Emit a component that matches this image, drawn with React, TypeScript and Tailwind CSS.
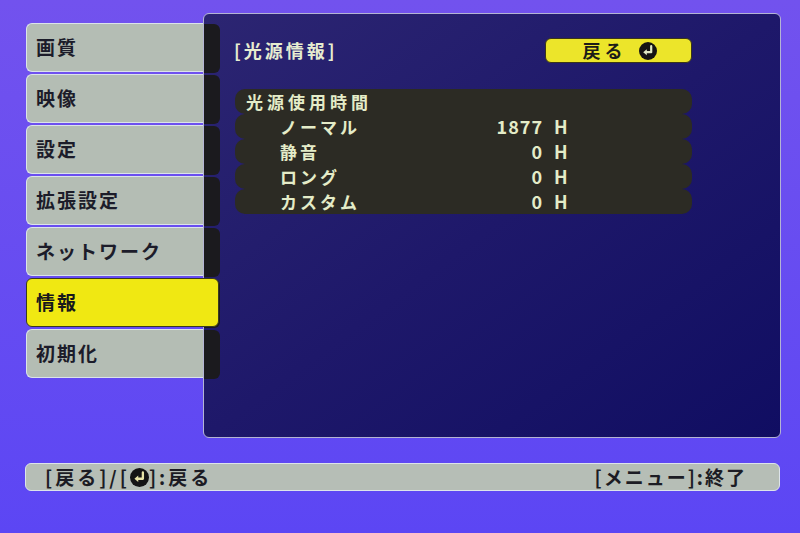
const MENU = ['画質', '映像', '設定', '拡張設定', 'ネットワーク', '情報', '初期化']
const ACTIVE = '情報'

const HOURS = [
  { label: 'ノーマル', value: '1877' },
  { label: '静音', value: '0' },
  { label: 'ロング', value: '0' },
  { label: 'カスタム', value: '0' },
]

const font = { fontFamily: '"Noto Sans CJK JP", "Noto Sans", sans-serif' }

function EnterIcon({ size = 18, arrow = '#dfe8c4' }: { size?: number; arrow?: string }) {
  return (
    <svg width={size} height={size} viewBox="0 0 18 18" className="shrink-0">
      <circle cx="9" cy="9" r="9" fill="#141414" />
      <path d="M12.2 4.2 V10.2 H7" fill="none" stroke={arrow} strokeWidth="2.2" strokeLinecap="round" strokeLinejoin="round" />
      <path d="M4.2 10.2 L7.8 7.2 L7.8 13.2 Z" fill={arrow} />
    </svg>
  )
}

export default function App() {
  return (
    <div
      style={font}
      className="flex h-[533px] w-[800px] flex-col overflow-hidden bg-gradient-to-b from-[#7252ee] to-[#5c46f4] pt-[13px] font-bold"
    >
      <div className="flex pl-[26px]">
        {/* side menu */}
        <div className="flex w-[177px] flex-col gap-[2px] pt-[10px]">
          {MENU.map((name) =>
            name === ACTIVE ? (
              <div
                key={name}
                className="relative z-10 flex h-[49px] w-[193px] items-center rounded-md border border-[#3a3a20] bg-[#f0e812] pl-[9px] text-[19px] tracking-[2px] text-[#18181c]"
              >
                {name}
              </div>
            ) : (
              <div
                key={name}
                className="flex h-[49px] items-center rounded-l-md border border-r-0 border-[#dbe3ea] bg-[#b4bdb4] pl-[9px] text-[19px] tracking-[2px] text-[#1c1c2a]"
              >
                {name}
              </div>
            ),
          )}
        </div>

        {/* info panel */}
        <div className="flex h-[425px] w-[578px] rounded-md border border-[#b4b4d4] bg-gradient-to-br from-[#2c2572] via-[#1e186a] to-[#100d62]">
          <div className="flex w-[16px] flex-col gap-[2px] pt-[10px]">
            {MENU.map((name) => (
              <div key={name} className="h-[49px] rounded-r-md bg-[#1b1a1e]" />
            ))}
          </div>

          <div className="flex flex-1 flex-col pl-[14px] pr-[88px] pt-[24px]">
            <div className="flex h-[25px] items-center justify-between">
              <span className="text-[18px] tracking-[3px] text-[#e6ecd0]">[光源情報]</span>
              <div className="flex h-[25px] w-[147px] items-center justify-center gap-[12px] rounded-md border border-[#3a3618] bg-[#ece52a] pl-[2px] text-[18px] tracking-[4px] text-[#1c1c18]">
                <span>戻る</span>
                <EnterIcon />
              </div>
            </div>

            <div className="mt-[26px] ml-[1px] flex flex-col text-[17px] text-[#e4ecc8]">
              <div className="flex h-[25px] items-center rounded-[10px] bg-[#2c2b24] pl-[11px] tracking-[4px]">
                光源使用時間
              </div>
              {HOURS.map((row) => (
                <div key={row.label} className="flex h-[25px] items-center rounded-[10px] bg-[#2c2b24] pl-[45px]">
                  <span className="w-[180px] tracking-[3px]">{row.label}</span>
                  <span className="w-[83px] text-right text-[18px] tracking-[1px]">{row.value}</span>
                  <span className="ml-[11px] text-[18px]">H</span>
                </div>
              ))}
            </div>
          </div>
        </div>
      </div>

      {/* key guide */}
      <div className="ml-[25px] mt-[25px] flex h-[28px] w-[755px] items-center justify-between rounded-md border border-[#dde4ea] bg-[#b6beb6] pl-[19px] pr-[32px] text-[19px] text-[#1c1c24]">
        <span className="flex items-center tracking-[3px]">
          [戻る]/[<EnterIcon size={19} arrow="#e8e4a8" />]:戻る
        </span>
        <span className="tracking-[2px]">[メニュー]:終了</span>
      </div>
    </div>
  )
}
